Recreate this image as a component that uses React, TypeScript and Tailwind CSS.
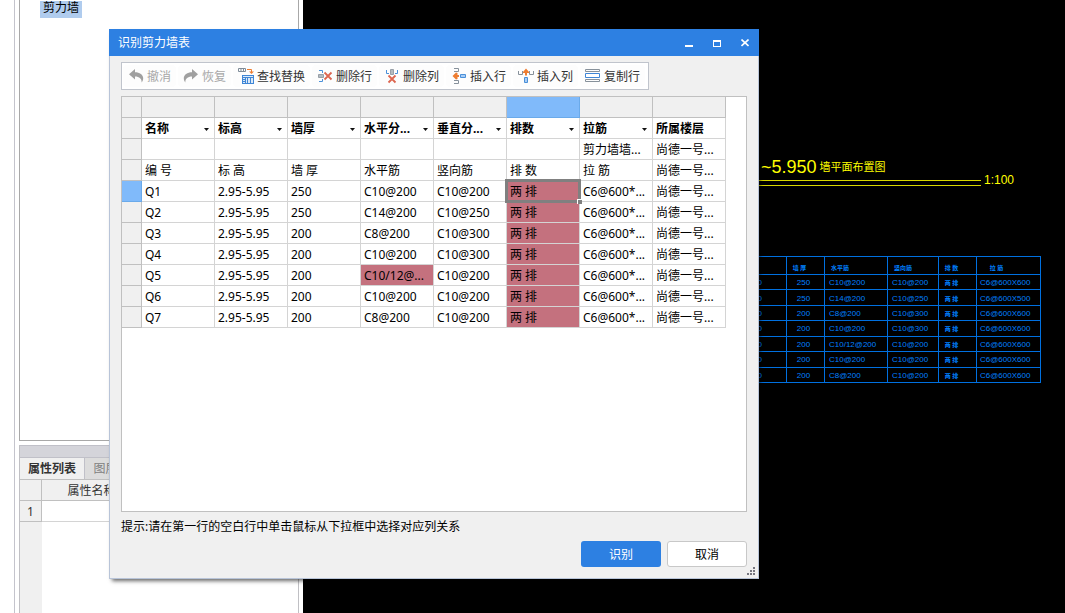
import type { ReactNode } from "react"

const COLUMNS = ["名称", "标高", "墙厚", "水平分...", "垂直分...", "排数", "拉筋", "所属楼层"]

const ROWS = [
  ["", "", "", "", "", "", "剪力墙墙...", "尚德一号..."],
  ["编 号", "标 高", "墙 厚", "水平筋", "竖向筋", "排 数", "拉 筋", "尚德一号..."],
  ["Q1", "2.95-5.95", "250", "C10@200", "C10@200", "两 排", "C6@600*...", "尚德一号..."],
  ["Q2", "2.95-5.95", "250", "C14@200", "C10@250", "两 排", "C6@600*...", "尚德一号..."],
  ["Q3", "2.95-5.95", "200", "C8@200", "C10@300", "两 排", "C6@600*...", "尚德一号..."],
  ["Q4", "2.95-5.95", "200", "C10@200", "C10@300", "两 排", "C6@600*...", "尚德一号..."],
  ["Q5", "2.95-5.95", "200", "C10/12@...", "C10@200", "两 排", "C6@600*...", "尚德一号..."],
  ["Q6", "2.95-5.95", "200", "C10@200", "C10@200", "两 排", "C6@600*...", "尚德一号..."],
  ["Q7", "2.95-5.95", "200", "C8@200", "C10@200", "两 排", "C6@600*...", "尚德一号..."],
]

const ACTIVE_ROW = 2
const ACTIVE_COL = 5

const CAD_ROWS = [
  ["2.95-5.950", "250", "C10@200", "C10@200", "两 排", "C6@600X600"],
  ["2.95-5.950", "250", "C14@200", "C10@250", "两 排", "C6@600X500"],
  ["2.95-5.950", "200", "C8@200", "C10@300", "两 排", "C6@600X600"],
  ["2.95-5.950", "200", "C10@200", "C10@300", "两 排", "C6@600X600"],
  ["2.95-5.950", "200", "C10/12@200", "C10@200", "两 排", "C6@600X600"],
  ["2.95-5.950", "200", "C10@200", "C10@200", "两 排", "C6@600X600"],
  ["2.95-5.950", "200", "C8@200", "C10@200", "两 排", "C6@600X600"],
]

// Cells the recognizer could not match are shown in red
function isInvalid(row: number, col: number) {
  return (row >= 2 && col === 5) || (row === 6 && col === 3)
}

function Icon({ children }: { children: ReactNode }) {
  return (
    <svg viewBox="0 0 16 16" className="h-4 w-4 shrink-0" fill="none" aria-hidden="true">
      {children}
    </svg>
  )
}

const UndoIcon = (
  <Icon>
    <path d="M1 6.200 7 1v3.200c4.600 0 8.200 2.600 8.200 6 0 1.600-.5 3-1.600 4.300.4-3.600-2.300-6-6.600-6v3z" fill="#a0a0a0" />
  </Icon>
)

const RedoIcon = (
  <Icon>
    <path d="M15 6.200 9 1v3.200c-4.600 0-8.200 2.600-8.200 6 0 1.600.5 3 1.600 4.300-.4-3.600 2.300-6 6.600-6v3z" fill="#a0a0a0" />
  </Icon>
)

const FindIcon = (
  <Icon>
    <path d="M.5.5h7v3h-7zM3 1v2M5.500 1v2" stroke="#7f8c99" />
    <path d="M9 1.500h4.500V4" stroke="#ee7d31" />
    <path d="M11 3.500h5L13.500 6z" fill="#ee7d31" />
    <path d="M4 7h12v9H4z" fill="#3f86d6" />
    <path d="M5 8h10v1H5zM5 10h2v1H5zM5 12h2v1H5zM5 14h2v1H5zM8 10h1v5H8zM10 10h2v5h-2zM13 10h2v5h-2z" fill="#dbe9f8" />
  </Icon>
)

const DeleteRowIcon = (
  <Icon>
    <path d="M2 2.500h3.500V5M2 13.500h3.500V11" stroke="#4a90d9" />
    <path d="M1.500 6.500h5v3h-5z" fill="#b4bac0" stroke="#98a0a8" />
    <path d="m7.500 4.500 7 7M14.500 4.500l-7 7" stroke="#dd6650" strokeWidth="1.800" />
  </Icon>
)

const DeleteColIcon = (
  <Icon>
    <path d="M2.500 2v3.500H5M13.500 2v3.500H11" stroke="#4a90d9" />
    <path d="M6.500 1.500h3v5h-3z" fill="#b4bac0" stroke="#98a0a8" />
    <path d="m4.500 7.500 7 7M11.500 7.500l-7 7" stroke="#dd6650" strokeWidth="1.800" />
  </Icon>
)

const InsertRowIcon = (
  <Icon>
    <path d="M3 .5h4.500v3H3M3 12.500h4.500v3H3" stroke="#87919b" />
    <path d="M1.500 8 5 4.500 6.500 5v2H8v2H6.500v2L5 11.500z" fill="#ee7d31" />
    <path d="M9.500 6.500h5v3h-5z" fill="#a9cdf5" stroke="#4a90d9" />
  </Icon>
)

const InsertColIcon = (
  <Icon>
    <path d="M.5 3v3.500h4V3M11.500 3v3.500h4V3" stroke="#87919b" />
    <path d="M8 .5 11 4v1H9v2.500H7V5H5V4z" fill="#ee7d31" />
    <path d="M6.500 9.500h3v5h-3z" fill="#a9cdf5" stroke="#4a90d9" />
  </Icon>
)

const CopyRowIcon = (
  <Icon>
    <path d="M.5 1.500h14v2H.5zM.5 11.500h14v2H.5z" stroke="#87919b" />
    <path d="M.5 5.500h14v4H.5z" fill="#fff" stroke="#3f86d6" />
  </Icon>
)

const TOOLS = [
  { label: "撤消", icon: UndoIcon, disabled: true },
  { label: "恢复", icon: RedoIcon, disabled: true },
  { label: "查找替换", icon: FindIcon },
  { label: "删除行", icon: DeleteRowIcon },
  { label: "删除列", icon: DeleteColIcon },
  { label: "插入行", icon: InsertRowIcon },
  { label: "插入列", icon: InsertColIcon },
  { label: "复制行", icon: CopyRowIcon },
]

function SidePanel() {
  return (
    <aside className="flex w-[303px] shrink-0 bg-white">
      <div className="w-[15px] border-r border-[#c4c4cc]" />
      <div className="ml-1 mr-1 flex flex-1 flex-col">
        <div className="flex-1 border border-t-0 border-[#a8a8a8] pl-5">
          <span className="inline-block h-[17px] bg-[#b0ccee] px-[3px] leading-[13px]">剪力墙</span>
        </div>
        <div className="mt-1 flex h-[168px] flex-col border-x border-[#c0c0c4]">
          <div className="h-[13px] border-y border-[#c0c0c8] bg-[#d4d4da]" />
          <div className="flex h-[22px] border-b border-[#c0c0c0] bg-[#f0f0f0]">
            <button className="w-[65px] border-r border-[#c0c0c8] font-bold text-[#333]">属性列表</button>
            <button className="w-[65px] bg-[#dcdcdc] text-[#808080]">图层管理</button>
          </div>
          <div className="flex-1 bg-[linear-gradient(to_right,#f0f0f0_22px,#fff_22px)]">
            <table className="w-full table-fixed border-separate border-spacing-0">
              <thead>
                <tr className="h-[21px] bg-[#f0f0f0] text-[#333]">
                  <th className="w-[22px] border-b border-r border-[#c0c0c0] p-0" />
                  <th className="w-[100px] border-b border-r border-[#c0c0c0] p-0 pt-[2px] font-normal">属性名称</th>
                  <th className="border-b border-[#c0c0c0] p-0 pt-[2px] font-normal">属性值</th>
                </tr>
              </thead>
              <tbody>
                <tr className="h-[21px]">
                  <th className="border-b border-r border-[#c0c0c0] bg-[#f0f0f0] p-0 pt-[2px] font-normal text-[#333]">1</th>
                  <td className="border-b border-r border-[#d4d4d4] bg-white p-0" />
                  <td className="border-b border-[#d4d4d4] bg-white p-0" />
                </tr>
              </tbody>
            </table>
          </div>
        </div>
      </div>
    </aside>
  )
}

function CadCanvas() {
  return (
    <main className="relative flex-1 overflow-hidden bg-black font-['Liberation_Sans','Noto_Sans_CJK_SC',sans-serif]">
      {/* Drawing title */}
      <div className="absolute left-[458px] top-[153px] flex items-center whitespace-nowrap text-[#ffff00]">
        <span className="text-lg leading-7">~5.950</span>
        <span className="ml-[3px] text-[11px] leading-7">墙平面布置图</span>
      </div>
      <div className="absolute left-[397px] top-[180px] h-[6px] w-[281px] border-y border-[#d8d800]" />
      <span className="absolute left-[681px] top-[170px] text-xs leading-5 text-[#ffff00]">1:100</span>

      {/* Wall schedule */}
      <table className="absolute left-[397px] top-[256px] h-[127px] w-[341px] table-fixed border-collapse text-[8px] leading-[12px] text-[#0080ff]">
        <thead>
          <tr className="h-[18px] align-bottom text-[6px]">
            <th className="w-[86px] border border-[#0070e0] p-0 font-bold">标 高</th>
            <th className="w-[38px] border border-[#0070e0] p-0 pr-3 font-bold">墙 厚</th>
            <th className="w-[63px] border border-[#0070e0] p-0 pr-8 font-bold">水平筋</th>
            <th className="w-[51px] border border-[#0070e0] p-0 pr-5 font-bold">竖向筋</th>
            <th className="w-[38px] border border-[#0070e0] p-0 pr-3 font-bold">排 数</th>
            <th className="border border-[#0070e0] p-0 pr-6 font-bold">拉 筋</th>
          </tr>
        </thead>
        <tbody>
          {CAD_ROWS.map((row, r) => (
            <tr key={r} className="h-[15px]">
              <td className="border border-[#0070e0] p-0 pr-6 pt-[2px] text-right">{row[0]}</td>
              <td className="border border-[#0070e0] p-0 pr-1 pt-[2px] text-center">{row[1]}</td>
              <td className="border border-[#0070e0] p-0 pl-1 pt-[2px]">{row[2]}</td>
              <td className="border border-[#0070e0] p-0 pl-1 pt-[2px]">{row[3]}</td>
              <td className="border border-[#0070e0] p-0 pr-3 pt-[2px] text-center text-[6px] font-bold">{row[4]}</td>
              <td className="border border-[#0070e0] p-0 pl-[3px] pt-[2px]">{row[5]}</td>
            </tr>
          ))}
        </tbody>
      </table>
    </main>
  )
}

function WallTable() {
  return (
    <table className="table-fixed border-separate border-spacing-0 text-left whitespace-nowrap">
      <thead>
        <tr className="h-[21px] bg-[#f0f0f0]">
          <th className="w-5 border-b border-r border-[#c0c0c0] p-0" />
          {COLUMNS.map((name, c) => (
            <th
              key={name}
              className={
                c === ACTIVE_COL
                  ? "w-[73px] border-b border-r border-[#6aaaea] bg-[#80bafa] p-0"
                  : "w-[73px] border-b border-r border-[#c0c0c0] p-0"
              }
            />
          ))}
        </tr>
        <tr className="h-[21px]">
          <th className="border-b border-r border-[#c0c0c0] bg-[#f0f0f0] p-0" />
          {COLUMNS.map((name, c) => (
            <th key={name} className="border-b border-r border-[#d4d4d4] p-0 px-[3px] pt-[2px]">
              {c < COLUMNS.length - 1 ? (
                <button className="flex w-full items-center justify-between font-bold">
                  {name}
                  <svg viewBox="0 0 5 3" className="mr-[2px] h-[3px] w-[5px]" aria-hidden="true">
                    <path d="M0 0h5L2.500 3z" fill="#111" />
                  </svg>
                </button>
              ) : (
                name
              )}
            </th>
          ))}
        </tr>
      </thead>
      <tbody>
        {ROWS.map((row, r) => (
          <tr key={r} className="h-[21px]">
            <th
              className={
                r === ACTIVE_ROW
                  ? "border-b border-r border-[#6aaaea] bg-[#80bafa] p-0"
                  : "border-b border-r border-[#c0c0c0] bg-[#f0f0f0] p-0"
              }
            />
            {row.map((value, c) => (
              <td
                key={c}
                className={
                  isInvalid(r, c)
                    ? "relative border-b border-r border-[#d4d4d4] bg-[#c4717e] p-0 px-[3px] pt-[2px]"
                    : "border-b border-r border-[#d4d4d4] p-0 px-[3px] pt-[2px]"
                }
              >
                {value}
                {r === ACTIVE_ROW && c === ACTIVE_COL && (
                  <span className="absolute -inset-[2px] z-10 border-[3px] border-[#808080]">
                    <span className="absolute -bottom-1 -right-1 h-[5px] w-[5px] border-l border-t border-white bg-[#808080]" />
                  </span>
                )}
              </td>
            ))}
          </tr>
        ))}
      </tbody>
    </table>
  )
}

function RecognizeDialog() {
  return (
    <section
      role="dialog"
      aria-labelledby="dialog-title"
      className="absolute left-[109px] top-[29px] w-[650px] bg-[#f0f0f0] shadow-[2px_3px_4px_-1px_rgba(0,0,0,0.6)]"
    >
      <header className="flex h-[27px] items-center justify-between bg-[#2d80e2] pl-[9px] text-white">
        <h1 id="dialog-title" className="pt-px">识别剪力墙表</h1>
        <div className="flex">
          <button aria-label="最小化" className="flex h-[27px] w-7 items-center justify-center">
            <svg viewBox="0 0 8 8" className="h-2 w-2" fill="#fff">
              <path d="M0 6h8v2H0z" />
            </svg>
          </button>
          <button aria-label="最大化" className="flex h-[27px] w-7 items-center justify-center">
            <svg viewBox="0 0 8 8" className="h-2 w-2" fill="#fff" fillRule="evenodd">
              <path d="M0 1h8v7H0zM1 3v4h6V3z" />
            </svg>
          </button>
          <button aria-label="关闭" className="flex h-[27px] w-7 items-center justify-center">
            <svg viewBox="0 0 8 8" className="h-2 w-2" stroke="#fff" strokeWidth="1.600">
              <path d="m.5.5 7 6.500M7.500.5l-7 6.500" />
            </svg>
          </button>
        </div>
      </header>

      <div className="border border-t-0 border-[#b8c4d8] px-[11px] pb-[11px] pt-[6px]">
        <div className="flex h-7 w-fit items-center gap-[2px] border border-[#c0c4cc] bg-white pl-px pr-[3px]">
          {TOOLS.map((tool) => (
            <button
              key={tool.label}
              disabled={tool.disabled}
              className="flex h-[22px] items-center gap-[3px] rounded-sm bg-[#fdfdfd] px-[5px] text-[#333] disabled:text-[#a8a8a8]"
            >
              {tool.icon}
              <span className="pt-[2px]">{tool.label}</span>
            </button>
          ))}
        </div>

        <div className="mt-[6px] h-[416px] border border-[#c0c0c0] bg-white">
          <WallTable />
        </div>

        <p className="mt-[5px] leading-5">提示:请在第一行的空白行中单击鼠标从下拉框中选择对应列关系</p>

        <div className="mt-1 flex justify-end gap-[6px]">
          <button className="h-[26px] w-20 rounded-[3px] bg-[#2d80e2] pt-[2px] text-white">识别</button>
          <button className="h-[26px] w-20 rounded-[3px] border border-[#c8c8c8] bg-white pt-[2px]">取消</button>
        </div>
      </div>

      <svg viewBox="0 0 8 8" className="absolute bottom-[4px] right-1 h-2 w-2" fill="#777780" aria-hidden="true">
        <path d="M6 0h2v2H6zM3 3h2v2H3zM6 3h2v2H6zM0 6h2v2H0zM3 6h2v2H3zM6 6h2v2H6z" />
      </svg>
    </section>
  )
}

export default function App() {
  return (
    <div className="relative flex h-screen min-h-[600px] overflow-hidden bg-white font-['Noto_Sans','Noto_Sans_CJK_SC',sans-serif] text-xs text-black">
      <SidePanel />
      <CadCanvas />
      <RecognizeDialog />
    </div>
  )
}
